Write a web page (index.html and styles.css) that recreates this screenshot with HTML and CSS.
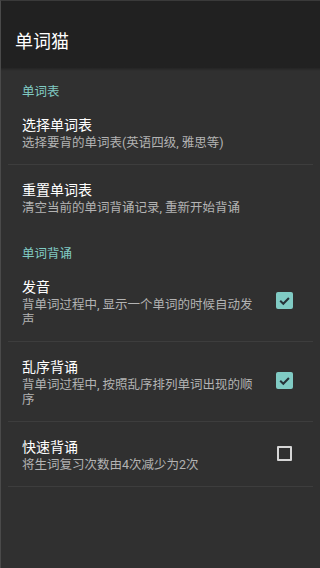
FILE: index.html
```html
<!DOCTYPE html>
<html lang="zh-CN">
<head>
  <meta charset="UTF-8" />
  <title>单词猫</title>
  <link rel="stylesheet" href="styles.css">
</head>
<body>

<div id="app">
  <!-- Toolbar -->
  <div class="toolbar">
    <h1 class="toolbar-title">单词猫</h1>
  </div>

  <!-- Preferences -->
  <div class="prefs">
    <div class="pref-category">单词表</div>

    <div class="pref-item">
      <div class="pref-text">
        <div class="pref-title">选择单词表</div>
        <div class="pref-summary">选择要背的单词表(英语四级, 雅思等)</div>
      </div>
    </div>
    <div class="divider"></div>

    <div class="pref-item">
      <div class="pref-text">
        <div class="pref-title">重置单词表</div>
        <div class="pref-summary">清空当前的单词背诵记录, 重新开始背诵</div>
      </div>
    </div>

    <div class="pref-category">单词背诵</div>

    <div class="pref-item">
      <div class="pref-text">
        <div class="pref-title">发音</div>
        <div class="pref-summary">背单词过程中, 显示一个单词的时候自动发声</div>
      </div>
      <div class="pref-widget">
        <svg class="checkbox" width="17" height="17" viewBox="0 0 17 17">
          <rect x="0" y="0" width="17" height="17" rx="2" fill="#80cbc4"/>
          <path d="M4.2 8.8 L7.3 11.8 L12.9 6" fill="none" stroke="#263238" stroke-width="2"/>
        </svg>
      </div>
    </div>
    <div class="divider"></div>

    <div class="pref-item">
      <div class="pref-text">
        <div class="pref-title">乱序背诵</div>
        <div class="pref-summary">背单词过程中, 按照乱序排列单词出现的顺序</div>
      </div>
      <div class="pref-widget">
        <svg class="checkbox" width="17" height="17" viewBox="0 0 17 17">
          <rect x="0" y="0" width="17" height="17" rx="2" fill="#80cbc4"/>
          <path d="M4.2 8.8 L7.3 11.8 L12.9 6" fill="none" stroke="#263238" stroke-width="2"/>
        </svg>
      </div>
    </div>
    <div class="divider"></div>

    <div class="pref-item">
      <div class="pref-text">
        <div class="pref-title">快速背诵</div>
        <div class="pref-summary">将生词复习次数由4次减少为2次</div>
      </div>
      <div class="pref-widget">
        <div class="checkbox-empty"></div>
      </div>
    </div>
    <div class="divider"></div>
  </div>
</div>

</body>
</html>
```

FILE: styles.css
```css
* {
  box-sizing: border-box;
}

html, body {
  margin: 0;
  height: 100%;
}

body {
  font-family: Roboto, 'Noto Sans CJK SC', sans-serif;
  background-color: #303030;
  color: #ffffff;
  overflow: hidden;
}

#app {
  min-height: 100vh;
  border-left: 1px solid #4a4a4a;
  border-top: 1px solid #3a3a3a;
  background-color: #303030;
}

/* Toolbar */
.toolbar {
  position: relative;
  height: 66px;
  background-color: #212121;
  padding: 27px 0 0 14px;
}

.toolbar::after {
  content: "";
  position: absolute;
  left: 0;
  right: 0;
  bottom: -4px;
  height: 4px;
  background: linear-gradient(rgba(0, 0, 0, 0.35), rgba(0, 0, 0, 0));
}

.toolbar-title {
  margin: 0;
  font-size: 18px;
  font-weight: normal;
  line-height: 28px;
  color: #ffffff;
}

/* Preferences list */
.pref-category {
  padding: 17px 0 0 21px;
  font-size: 12.5px;
  line-height: 16px;
  color: #80cbc4;
}

.pref-item {
  display: flex;
  align-items: center;
  padding: 15px 12px 14px 21px;
}

.pref-text {
  flex: 1;
}

.pref-title {
  font-size: 14px;
  line-height: 20px;
  color: #ffffff;
}

.pref-summary {
  font-size: 12.5px;
  line-height: 15px;
  color: #b3b3b3;
}

.pref-widget {
  width: 48px;
  display: flex;
  justify-content: center;
  align-items: center;
  margin-top: -4px;
}

.checkbox {
  display: block;
}

.checkbox-empty {
  width: 15px;
  height: 15px;
  border: 2px solid #d6d6d6;
  border-radius: 1px;
  margin-top: 2px;
}

.divider {
  height: 1px;
  margin: 0 7px 0 7px;
  background-color: #3d3d3d;
}
```
